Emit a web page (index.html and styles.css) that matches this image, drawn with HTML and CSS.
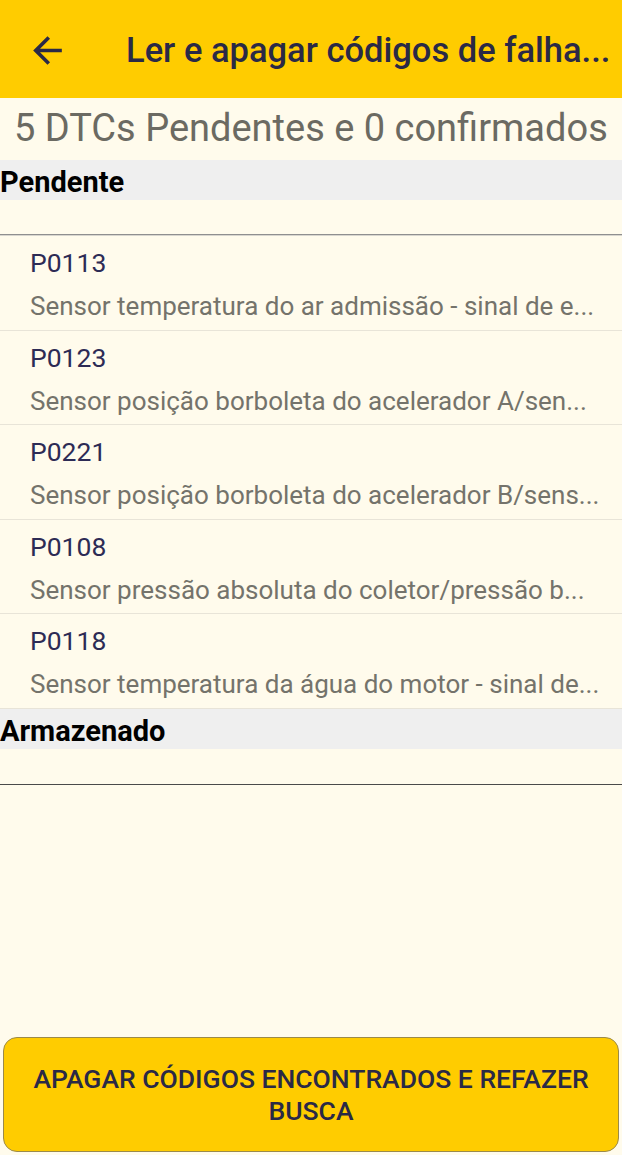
FILE: index.html
```html
<!DOCTYPE html>
<html lang="pt">

<head>
	<meta charset="utf-8">
	<title>Ler e apagar códigos de falha</title>
	<link rel="stylesheet" href="styles.css">
</head>

<body>
	<!-- Toolbar -->
	<header class="toolbar">
		<svg class="back-icon" width="43" height="43" viewBox="0 0 24 24">
			<path d="M20 11H7.83l5.59-5.59L12 4l-8 8 8 8 1.41-1.41L7.83 13H20v-2z" fill="#2a2946"/>
		</svg>
		<h1 class="toolbar-title">Ler e apagar códigos de falha...</h1>
	</header>

	<!-- Summary -->
	<p class="summary">5 DTCs Pendentes e 0 confirmados</p>

	<!-- Pending section -->
	<div class="section-title">Pendente</div>
	<div class="section-space"></div>
	<ul class="dtc-list">
		<li class="dtc-item">
			<span class="dtc-code">P0113</span>
			<span class="dtc-desc">Sensor temperatura do ar admissão - sinal de e...</span>
		</li>
		<li class="dtc-item">
			<span class="dtc-code">P0123</span>
			<span class="dtc-desc">Sensor posição borboleta do acelerador A/sen...</span>
		</li>
		<li class="dtc-item">
			<span class="dtc-code">P0221</span>
			<span class="dtc-desc">Sensor posição borboleta do acelerador B/sens...</span>
		</li>
		<li class="dtc-item">
			<span class="dtc-code">P0108</span>
			<span class="dtc-desc">Sensor pressão absoluta do coletor/pressão b...</span>
		</li>
		<li class="dtc-item">
			<span class="dtc-code">P0118</span>
			<span class="dtc-desc">Sensor temperatura da água do motor - sinal de...</span>
		</li>
	</ul>

	<!-- Stored section -->
	<div class="section-title">Armazenado</div>
	<div class="section-space section-space-dark"></div>

	<!-- Action button -->
	<div class="footer">
		<button class="btn-clear">APAGAR CÓDIGOS ENCONTRADOS E REFAZER BUSCA</button>
	</div>
</body>

</html>
```

FILE: styles.css
```css
/* Page base */
body {
	margin: 0;
	height: 1155px;
	display: flex;
	flex-direction: column;
	background-color: #fffbec;
	font-family: Roboto, "Noto Sans", sans-serif;
	overflow: hidden;
}

/* Yellow toolbar */
.toolbar {
	height: 98px;
	flex-shrink: 0;
	display: flex;
	align-items: center;
	background-color: #ffcc00;
	padding-left: 26px;
}

.back-icon {
	display: block;
	margin-top: 2px;
}

.toolbar-title {
	margin: 2px 0 0 57px;
	font-size: 34.5px;
	font-weight: 500;
	color: #2a2946;
	white-space: nowrap;
}

/* Summary line */
.summary {
	margin: 0;
	height: 62px;
	line-height: 60px;
	padding-left: 14px;
	font-size: 38px;
	color: #6b6a62;
	white-space: nowrap;
}

/* Section headers */
.section-title {
	height: 40px;
	line-height: 44px;
	background-color: #efefef;
	font-size: 29px;
	font-weight: 700;
	color: #000;
	white-space: nowrap;
}

.section-space {
	height: 34px;
	border-bottom: 1px solid #8f8f8f;
	box-shadow: 0 1px 0 #d8d6cf;
}

.section-space-dark {
	height: 35px;
	border-bottom-color: #4a4a4a;
	box-shadow: none;
}

/* DTC list */
.dtc-list {
	list-style: none;
	margin: 1px 0 0;
	padding: 0;
}

.dtc-item {
	height: 93.5px;
	display: flex;
	flex-direction: column;
	padding-left: 30px;
	border-bottom: 1px solid #e8e4d8;
}

.dtc-code {
	margin-top: 12px;
	font-size: 26.5px;
	line-height: 30px;
	color: #2d2b55;
}

.dtc-desc {
	margin-top: 13px;
	font-size: 26px;
	line-height: 30px;
	color: #74736b;
	white-space: nowrap;
}

/* Bottom button */
.footer {
	margin-top: auto;
	padding: 0 3px 3px;
}

.btn-clear {
	width: 100%;
	height: 115px;
	padding: 0 20px;
	background-color: #ffcc00;
	border: 1px solid #9b8a4a;
	border-radius: 14px;
	font-family: Roboto, "Noto Sans", sans-serif;
	font-size: 26.5px;
	font-weight: 500;
	line-height: 32px;
	color: #2a2946;
}
```
